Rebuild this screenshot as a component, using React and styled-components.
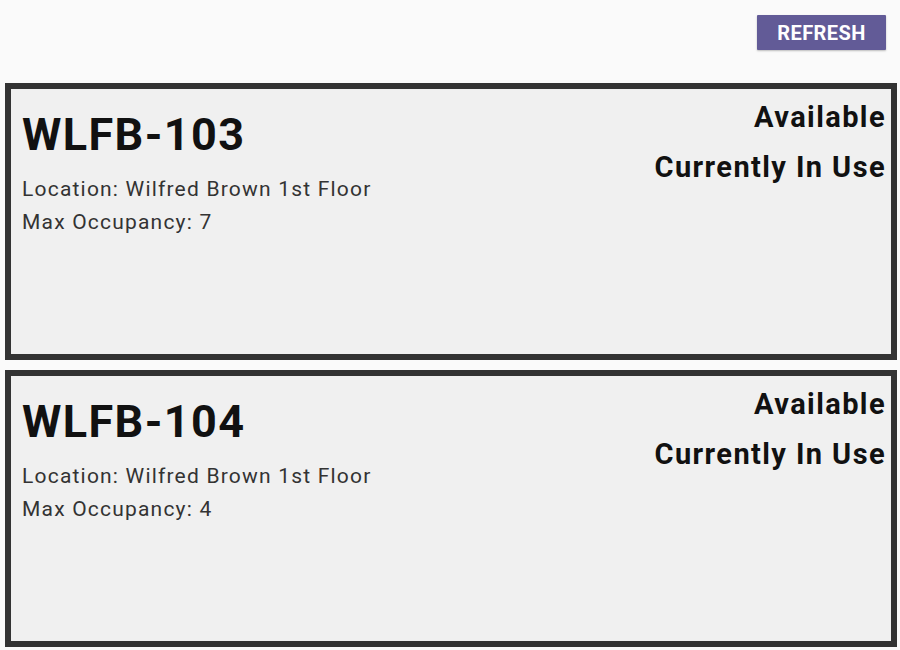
import React from 'react';
import styled, { createGlobalStyle } from 'styled-components';

const GlobalStyle = createGlobalStyle`
  body {
    margin: 0;
    background: #fafafa;
    font-family: Roboto, "Liberation Sans", sans-serif;
  }
`;

const Page = styled.div`
  width: 900px;
  height: 650px;
  overflow: hidden;
  background: #fafafa;
`;

const Header = styled.div`
  height: 83px;
  display: flex;
  justify-content: flex-end;
  align-items: flex-start;
  padding: 15px 14px 0 0;
  box-sizing: border-box;
`;

const RefreshButton = styled.button`
  width: 129px;
  height: 35px;
  background: #625b97;
  color: #ffffff;
  border: none;
  border-radius: 1px;
  font-family: Roboto, "Liberation Sans", sans-serif;
  font-size: 20px;
  font-weight: 700;
  letter-spacing: 0.4px;
  padding: 0;
  box-shadow: 0 1px 2px rgba(0, 0, 0, 0.25);
`;

const CardList = styled.div`
  display: flex;
  flex-direction: column;
  gap: 10px;
  margin: 0 3px 0 5px;
`;

const Card = styled.div`
  height: 277px;
  box-sizing: border-box;
  border: 6px solid #333333;
  background: #f0f0f0;
  display: flex;
  justify-content: space-between;
  padding: 0 6px 0 11px;
`;

const Info = styled.div`
  padding-top: 19px;
`;

const Title = styled.h1`
  margin: 0 0 12px;
  font-size: 45px;
  line-height: 53px;
  font-weight: 700;
  letter-spacing: 1.4px;
  color: #111111;
`;

const Detail = styled.div`
  font-size: 21px;
  line-height: 33px;
  letter-spacing: 1.2px;
  color: #333333;
`;

const Status = styled.div`
  padding-top: 3px;
  margin-right: -1px;
  text-align: right;
`;

const StatusLine = styled.div`
  font-size: 29px;
  line-height: 50px;
  font-weight: 700;
  letter-spacing: 1.4px;
  color: #111111;
`;

const rooms = [
  { id: 'WLFB-103', location: 'Wilfred Brown 1st Floor', max: 7 },
  { id: 'WLFB-104', location: 'Wilfred Brown 1st Floor', max: 4 },
];

const RoomCard = ({ room }) => (
  <Card>
    <Info>
      <Title>{room.id}</Title>
      <Detail>Location: {room.location}</Detail>
      <Detail>Max Occupancy: {room.max}</Detail>
    </Info>
    <Status>
      <StatusLine>Available</StatusLine>
      <StatusLine>Currently In Use</StatusLine>
    </Status>
  </Card>
);

const App = () => (
  <Page>
    <GlobalStyle />
    <Header>
      <RefreshButton>REFRESH</RefreshButton>
    </Header>
    <CardList>
      {rooms.map((room) => (
        <RoomCard key={room.id} room={room} />
      ))}
    </CardList>
  </Page>
);

export default App;
